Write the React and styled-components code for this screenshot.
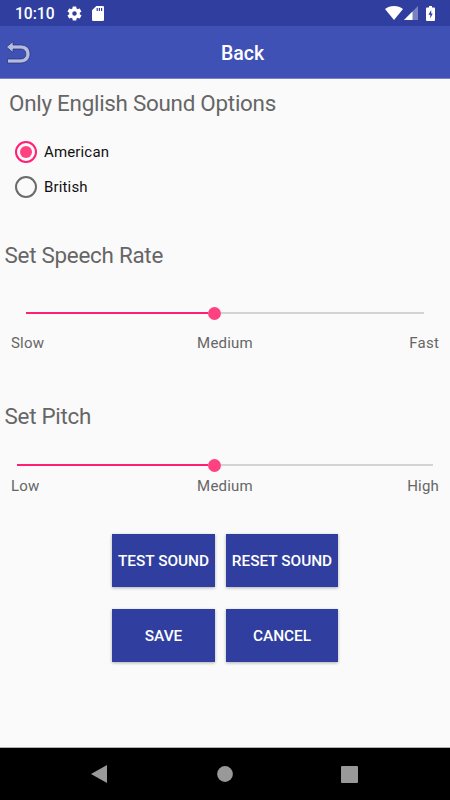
import React, { useState } from "react";
import styled, { createGlobalStyle } from "styled-components";

const GlobalStyle = createGlobalStyle`
    * {
        box-sizing: border-box;
    }
    body {
        margin: 0;
        background: #fafafa;
        font-family: Roboto, "Liberation Sans", sans-serif;
    }
    button {
        font-family: inherit;
        border: 0;
        padding: 0;
    }
`;

const StatusBar = () => (
    <StatusWrapper>
        <span className="time">10:10</span>
        <svg className="gear" width="17" height="17" viewBox="0 0 24 24" fill="#fff">
            <path d="M19.4 13c0-.3.1-.6.1-1s0-.7-.1-1l2.1-1.6c.2-.2.2-.4.1-.6l-2-3.5c-.1-.2-.4-.3-.6-.2l-2.5 1c-.5-.4-1.1-.7-1.7-1l-.4-2.6c0-.3-.2-.5-.5-.5h-4c-.3 0-.5.2-.5.4L9.1 5.1c-.6.2-1.2.6-1.7 1l-2.5-1c-.2-.1-.5 0-.6.2l-2 3.5c-.1.2-.1.5.1.6L4.6 11c-.1.3-.1.7-.1 1s0 .7.1 1l-2.2 1.6c-.2.2-.2.4-.1.6l2 3.5c.1.2.4.3.6.2l2.5-1c.5.4 1.1.7 1.7 1l.4 2.6c0 .3.2.5.5.5h4c.3 0 .5-.2.5-.4l.4-2.7c.6-.2 1.2-.6 1.7-1l2.5 1c.2.1.5 0 .6-.2l2-3.5c.1-.2.1-.5-.1-.6L19.4 13zM12 15.2a3.2 3.2 0 1 1 0-6.4 3.2 3.2 0 0 1 0 6.4z" />
        </svg>
        <svg className="card" width="12" height="15" viewBox="0 0 12 15">
            <path fill="#fff" d="M4.3 0H10.8Q12 0 12 1.2V13.8Q12 15 10.8 15H1.2Q0 15 0 13.8V4.3Z" />
            <path stroke="#303f9f" strokeWidth="1.2" d="M5.2 2v3M7.4 2v3M9.6 2v3" />
        </svg>
        <div className="right">
            <svg width="18" height="14" viewBox="0 0 18 14">
                <path fill="#fff" d="M9 14 0 2.9C2.5 1 5.5 0 9 0s6.500 1 9 2.9Z" />
            </svg>
            <svg className="signal" width="14" height="14" viewBox="0 0 14 14">
                <path fill="#fff" opacity="0.35" d="M14 0V14H0Z" />
                <path fill="#fff" d="M8.5 5.5V14H0Z" />
            </svg>
            <svg className="battery" width="9" height="15" viewBox="0 0 9 15">
                <path fill="#fff" d="M3 0h3v1.5h2Q9 1.5 9 2.5v11.5Q9 15 8 15H1Q0 15 0 14V2.5Q0 1.5 1 1.5h2Z" />
                <path fill="#303f9f" d="M5.2 4 2.4 8.800h1.900v3.600L6.700 7.600H5.200Z" />
            </svg>
        </div>
    </StatusWrapper>
);

const AppBar = () => (
    <AppBarWrapper>
        <svg width="26" height="24" viewBox="0 0 26 24">
            <path
                fill="#b4bce6"
                stroke="#26315f"
                strokeWidth="0.7"
                strokeLinejoin="round"
                d="M.5 7 7 1.5V5H14.5C20.3 5 24 8.4 24 13.8C24 19.4 20.3 23 14.5 23H1.5V19H14.5C17.9 19 19.9 17.2 19.9 13.9C19.9 10.7 17.9 9 14.5 9H7V12.5Z"
            />
        </svg>
        <h1>Back</h1>
    </AppBarWrapper>
);

const LabelledSlider = ({ labels, inset, gap, value }) => (
    <div>
        <Track $inset={inset}>
            <Filled style={{ width: `${value}%` }} />
            <Thumb />
            <Rest />
        </Track>
        <Labels $gap={gap}>
            {labels.map((label) => (
                <span key={label}>{label}</span>
            ))}
        </Labels>
    </div>
);

const App = () => {
    const [accent, setAccent] = useState("American");

    return (
        <Screen>
            <GlobalStyle />
            <StatusBar />
            <AppBar />
            <Content>
                <Heading $indent="9px">Only English Sound Options</Heading>
                <RadioGroup>
                    {["American", "British"].map((name) => (
                        <RadioRow key={name} onClick={() => setAccent(name)}>
                            <Radio $checked={accent === name} />
                            {name}
                        </RadioRow>
                    ))}
                </RadioGroup>

                <Heading $top="36px" $bottom="33px">Set Speech Rate</Heading>
                <LabelledSlider labels={["Slow", "Medium", "Fast"]} inset="26px" gap="10px" value={45.7} />

                <Heading $top="48px" $bottom="24px">Set Pitch</Heading>
                <LabelledSlider labels={["Low", "Medium", "High"]} inset="17px" gap="1px" value={45.9} />

                <ButtonGrid>
                    <ActionButton>TEST SOUND</ActionButton>
                    <ActionButton>RESET SOUND</ActionButton>
                    <ActionButton>SAVE</ActionButton>
                    <ActionButton>CANCEL</ActionButton>
                </ButtonGrid>
            </Content>
            <NavBar>
                <svg width="16" height="18" viewBox="0 0 16 18">
                    <path fill="#999" d="M0 9 16 0v18Z" />
                </svg>
                <svg className="home" width="16" height="16" viewBox="0 0 16 16">
                    <circle cx="8" cy="8" r="7.9" fill="#999" />
                </svg>
                <svg width="17" height="17" viewBox="0 0 17 17">
                    <rect width="17" height="17" rx="1" fill="#999" />
                </svg>
            </NavBar>
        </Screen>
    );
};

const Screen = styled.div`
    display: flex;
    flex-direction: column;
    width: 450px;
    height: 800px;
    overflow: hidden;
    background: #fafafa;
`;

const StatusWrapper = styled.header`
    display: flex;
    align-items: center;
    flex: none;
    height: 26px;
    padding: 0 15px;
    background: #303f9f;
    color: #fff;
    .time {
        width: 51px;
        font-size: 15.6px;
        font-weight: 500;
        line-height: 26px;
        padding-top: 1px;
    }
    .card {
        margin-left: 9px;
    }
    .right {
        display: flex;
        align-items: center;
        margin-left: auto;
    }
    .signal {
        margin-left: 1px;
    }
    .battery {
        margin-left: 8px;
    }
`;

const AppBarWrapper = styled.div`
    display: flex;
    align-items: center;
    flex: none;
    height: 53px;
    padding-left: 6px;
    background: #3f51b5;
    border-bottom: 1px solid #7784cb;
    h1 {
        margin: 2px 0 0 189px;
        color: #fff;
        font-size: 19.5px;
        font-weight: 500;
    }
`;

const Content = styled.main`
    flex: 1;
    padding-top: 9px;
`;

const Heading = styled.h2`
    margin: ${(props) => props.$top || 0} 0 ${(props) => props.$bottom || 0};
    padding-left: ${(props) => props.$indent || "4.5px"};
    color: #666;
    font-size: 22.4px;
    font-weight: 400;
    letter-spacing: -0.26px;
    line-height: 30px;
`;

const RadioGroup = styled.div`
    padding: 16px 0 0 15px;
`;

const RadioRow = styled.div`
    display: flex;
    align-items: center;
    gap: 7px;
    height: 35px;
    color: #111;
    font-size: 15px;
    letter-spacing: 0.15px;
`;

const Radio = styled.span`
    display: flex;
    align-items: center;
    justify-content: center;
    width: 22px;
    height: 22px;
    border: 2px solid ${(props) => (props.$checked ? "#ff1f74" : "#6b6b6b")};
    border-radius: 50%;
    &::after {
        content: "";
        width: 12px;
        height: 12px;
        border-radius: 50%;
        background: ${(props) => (props.$checked ? "#ff4081" : "transparent")};
    }
`;

const Track = styled.div`
    display: flex;
    align-items: center;
    height: 20px;
    margin: 0 ${(props) => props.$inset};
`;

const Filled = styled.div`
    height: 2px;
    background: #ff1f74;
`;

const Thumb = styled.div`
    flex: none;
    width: 13px;
    height: 13px;
    border-radius: 50%;
    background: #ff4081;
`;

const Rest = styled.div`
    flex: 1;
    height: 2px;
    background: #d3d3d3;
`;

const Labels = styled.div`
    display: grid;
    grid-template-columns: 1fr auto 1fr;
    margin-top: ${(props) => props.$gap};
    padding: 0 11px;
    color: #666;
    font-size: 15px;
    letter-spacing: 0.2px;
    line-height: 20px;
    span:last-child {
        text-align: right;
    }
`;

const ButtonGrid = styled.div`
    display: grid;
    grid-template-columns: 103px 112px;
    grid-auto-rows: 53px;
    justify-content: center;
    gap: 22px 11px;
    margin-top: 38px;
`;

const ActionButton = styled.button`
    padding-top: 1px;
    background: #303f9f;
    color: #fff;
    font-size: 15.4px;
    font-weight: 500;
    white-space: nowrap;
    box-shadow: 0 1px 3px rgba(0, 0, 0, 0.3);
`;

const NavBar = styled.nav`
    display: flex;
    align-items: center;
    justify-content: space-between;
    flex: none;
    height: 53px;
    padding: 0 92px 0 91px;
    background: #000;
    border-top: 1px solid #b0b0b0;
    .home {
        margin-left: 2px;
    }
`;

export default App;
